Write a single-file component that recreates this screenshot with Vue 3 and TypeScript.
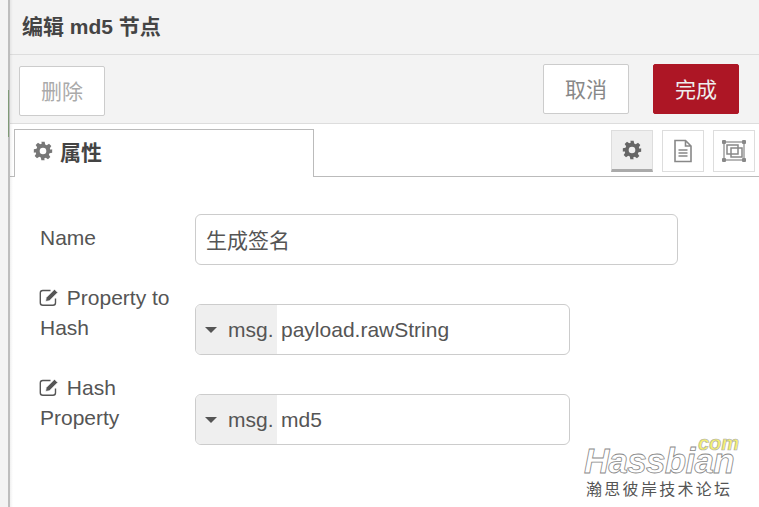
<template>
  <div class="page">
    <div class="tray">
      <header class="tray-header">编辑 md5 节点</header>
      <div class="toolbar">
        <button class="btn delete">删除</button>
        <div class="toolbar-right">
          <button class="btn">取消</button>
          <button class="btn primary">完成</button>
        </div>
      </div>
      <div class="tabs">
        <div class="tab">
          <svg class="tab-gear" viewBox="0 0 24 24"><path :d="gearPath" fill-rule="evenodd" /></svg>
          <span>属性</span>
        </div>
        <div class="tab-icons">
          <button class="icon-btn selected">
            <svg class="gear" viewBox="0 0 24 24"><path :d="gearPath" fill-rule="evenodd" /></svg>
          </button>
          <button class="icon-btn">
            <svg class="doc" viewBox="0 0 20 24">
              <path d="M2 1.5h10.5L18 7v15.5H2z M12.5 1.5V7H18" fill="none" stroke="currentColor" stroke-width="1.6" />
              <path d="M5.5 11h9M5.5 14h9M5.5 17h9" stroke="currentColor" stroke-width="1.4" />
            </svg>
          </button>
          <button class="icon-btn">
            <svg class="frame" viewBox="0 0 26 24">
              <rect x="3" y="3" width="20" height="18" fill="none" stroke="currentColor" stroke-width="1.2" />
              <rect x="6" y="6" width="11" height="9" fill="none" stroke="currentColor" stroke-width="1.5" />
              <rect x="10" y="9" width="11" height="9" fill="none" stroke="currentColor" stroke-width="1.5" />
              <rect x="1" y="1" width="4" height="4" rx="1" fill="currentColor" />
              <rect x="21" y="1" width="4" height="4" rx="1" fill="currentColor" />
              <rect x="1" y="19" width="4" height="4" rx="1" fill="currentColor" />
              <rect x="21" y="19" width="4" height="4" rx="1" fill="currentColor" />
            </svg>
          </button>
        </div>
      </div>
      <form class="form">
        <div class="row">
          <label class="label name-label">Name</label>
          <div class="field wide">生成签名</div>
        </div>
        <div v-for="row in typedRows" :key="row.value" class="row typed">
          <label class="label">
            <svg class="edit" viewBox="0 0 20 20">
              <path d="M16 11.500v4.200a2.500 2.500 0 0 1-2.500 2.500H3.300a2.500 2.500 0 0 1-2.500-2.500V6a2.500 2.500 0 0 1 2.500-2.500H11" fill="none" stroke="currentColor" stroke-width="1.4" />
              <path d="M6 14.500l.7-4 8.300-8.300 3.300 3.300-8.300 8.300z" fill="currentColor" stroke="#fff" stroke-width="0.8" />
            </svg>
            {{ row.first }}<br />{{ row.second }}
          </label>
          <div class="field narrow">
            <span class="type"><i class="caret"></i>msg.</span>
            <span class="value">{{ row.value }}</span>
          </div>
        </div>
      </form>
    </div>
    <i class="edge-tint"></i>
    <div class="watermark">
      <div class="mark-com">com</div>
      <div class="mark-name">Hassbian</div>
      <div class="mark-sub">瀚思彼岸技术论坛</div>
    </div>
  </div>
</template>

<script setup lang="ts">
const gearPath =
  'M10 1h4l.6 3.2 1.9.8 2.7-1.8 2.8 2.8-1.8 2.7.8 1.9L23 10v4l-3.2.6-.8 1.9 1.8 2.7-2.8 2.8-2.7-1.8-1.9.8L14 23h-4l-.6-3.2-1.9-.8-2.7 1.8-2.8-2.8 1.8-2.7-.8-1.9L1 14v-4l3.2-.6.8-1.9-1.8-2.7 2.8-2.8 2.7 1.8 1.9-.8z M12 8a4 4 0 1 0 0 8 4 4 0 0 0 0-8z'

const typedRows = [
  { first: 'Property to', second: 'Hash', value: 'payload.rawString' },
  { first: 'Hash', second: 'Property', value: 'md5' },
]
</script>

<style>
html,
body {
  margin: 0;
  background: #f3f3f3;
}
</style>

<style scoped>
.page {
  position: relative;
  width: 759px;
  height: 507px;
  overflow: hidden;
  background: #f3f3f3;
  font-family: "Liberation Sans", "Noto Sans CJK SC", sans-serif;
  color: #555;
}

/* tray sits over the workspace, only a sliver of it shows on the left */
.tray {
  position: relative;
  margin-left: 8px;
  height: 507px;
  background: #fff;
  border-left: 2px solid #bdbdbd;
  box-sizing: border-box;
}

.tray::after {
  content: "";
  position: absolute;
  left: 0;
  top: 0;
  bottom: 0;
  width: 3px;
  background: linear-gradient(to right, rgba(0, 0, 0, 0.06), rgba(0, 0, 0, 0));
  pointer-events: none;
}

.edge-tint {
  position: absolute;
  left: 8px;
  top: 90px;
  width: 1px;
  height: 47px;
  background: #7f9a76;
}

.tray-header {
  height: 41px;
  padding: 13px 0 0 12px;
  background: #f3f3f3;
  border-bottom: 1px solid #ddd;
  color: #444;
  font-size: 21px;
  font-weight: bold;
  line-height: 28px;
}

.toolbar {
  display: flex;
  justify-content: space-between;
  height: 68px;
  background: #f3f3f3;
  border-bottom: 1px solid #ddd;
}

.toolbar-right {
  display: flex;
  gap: 24px;
  margin: 9px 20px 0 0;
}

.btn {
  width: 86px;
  height: 50px;
  padding: 0 0 3px;
  background: #fff;
  border: 1px solid #ccc;
  border-radius: 2px;
  box-sizing: border-box;
  color: #888;
  font: inherit;
  font-size: 21px;
}

.delete {
  margin: 11px 0 0 9px;
  color: #aaa;
}

.primary {
  background: #ad1625;
  border-color: #ad1625;
  color: #eee;
}

.tabs {
  display: flex;
  justify-content: space-between;
  height: 53px;
  padding: 5px 0 0 4px;
  box-sizing: border-box;
  border-bottom: 1px solid #bbb;
}

.tab {
  display: flex;
  align-items: center;
  gap: 7px;
  width: 300px;
  height: 48px;
  padding: 0 0 5px 18px;
  background: #fff;
  border: 1px solid #bbb;
  border-bottom: none;
  box-sizing: border-box;
  color: #444;
  font-size: 21px;
  font-weight: bold;
}

.tab-gear {
  width: 20px;
  height: 20px;
  fill: #777;
}

.tab-icons {
  display: flex;
  gap: 9px;
  margin: 1px 4px 0 0;
}

.icon-btn {
  display: flex;
  align-items: center;
  justify-content: center;
  width: 42px;
  height: 42px;
  padding: 0;
  background: #fff;
  border: 1px solid #ddd;
  box-sizing: border-box;
  color: #888;
}

.icon-btn.selected {
  background: #efefef;
  border-bottom: 3px solid #aaa;
  color: #666;
}

.gear {
  width: 20px;
  height: 20px;
  fill: currentColor;
}

.doc {
  width: 20px;
  height: 24px;
}

.frame {
  width: 26px;
  height: 24px;
}

.form {
  padding: 37px 0 0 30px;
}

.row {
  display: flex;
  margin-bottom: 39px;
}

.label {
  width: 155px;
  flex: none;
  font-size: 21px;
  line-height: 30px;
  color: #555;
}

.name-label {
  padding-top: 9px;
}

.typed {
  align-items: flex-start;
}

.typed .label {
  margin-top: -21px;
  height: 60px;
}

.edit {
  width: 21px;
  height: 20px;
  margin: 0 1px 0 -1px;
  vertical-align: -2px;
}

.field {
  display: flex;
  align-items: center;
  height: 51px;
  background: #fff;
  border: 1px solid #ccc;
  border-radius: 6px;
  box-sizing: border-box;
  color: #555;
  font-size: 21px;
}

.wide {
  width: 483px;
  padding: 0 0 2px 10px;
}

.narrow {
  width: 375px;
  overflow: hidden;
}

.type {
  display: flex;
  align-items: center;
  width: 81px;
  height: 100%;
  flex: none;
  padding-left: 9px;
  background: #efefef;
  box-sizing: border-box;
}

.caret {
  width: 0;
  height: 0;
  margin-right: 11px;
  border: 6px solid transparent;
  border-top: 6px solid #555;
  border-bottom: none;
}

.value {
  padding-left: 4px;
}

.watermark {
  position: absolute;
  left: 584px;
  top: 434px;
  width: 160px;
}

.mark-com {
  position: absolute;
  left: 114px;
  top: 3px;
  color: #f5f070;
  font-size: 20px;
  font-style: italic;
  font-weight: bold;
  line-height: 12px;
  -webkit-text-stroke: 0.6px #aaa;
}

.mark-name {
  margin-top: 16px;
  color: #fff;
  font-size: 35px;
  font-style: italic;
  font-weight: bold;
  letter-spacing: -0.7px;
  line-height: 22px;
  -webkit-text-stroke: 0.8px #888;
}

.mark-sub {
  margin-top: 8px;
  padding-left: 2px;
  color: #555;
  font-size: 16px;
  letter-spacing: 2.3px;
  line-height: 20px;
}
</style>
